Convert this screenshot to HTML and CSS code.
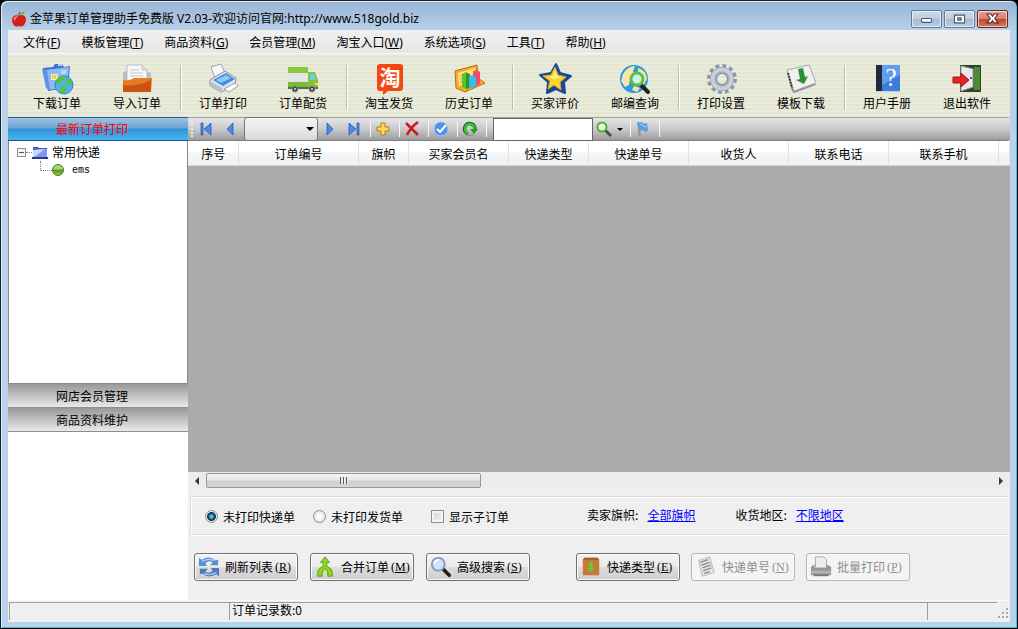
FILE: index.html
```html
<!DOCTYPE html>
<html lang="zh-CN">
<head>
  <meta charset="UTF-8">
  <meta name="viewport" content="width=device-width, initial-scale=1.0">
  <title>金苹果订单管理助手免费版</title>
  <link rel="stylesheet" href="styles.css">
</head>
<body>
  <div class="window">
    <header class="titlebar">
      <svg class="app-icon" viewBox="0 0 16 16">
        <path d="M8 5C5 3 1 4.500 1 9c0 4 3 7 5 6.500q2-.6 4 0c2 .5 5-3 5-7C15 4.500 11 3 8 5z" fill="#d3201b"/>
        <path d="M3 7q1-2.500 4-1.500Q4 7 3.500 10q-1-1-.5-3z" fill="#ff9a8c"/>
        <path d="M8 6Q7.500 3 9 1" stroke="#6b3a14" fill="none"/>
        <path d="M9 3.500q1-3 5-3-1 3.500-5 3z" fill="#6cb52d"/>
      </svg>
      <h1>金苹果订单管理助手免费版 V2.03-欢迎访问官网:http://www.518gold.biz</h1>
      <div class="window-buttons">
        <button type="button" aria-label="最小化"><svg viewBox="2 1 26 14"><rect x="10.500" y="7.500" width="9" height="3.500" rx="1" fill="#fff" stroke="#4a5568"/></svg></button>
        <button type="button" aria-label="最大化"><svg viewBox="2 1 26 14"><path fill-rule="evenodd" d="M10.500 4.500h9v7h-9zM13.500 7v2h3v-2z" fill="#fff" stroke="#4a5568"/></svg></button>
        <button type="button" class="close" aria-label="关闭"><svg viewBox="2 1 26 14"><path d="M10 3.500h3.500l1.500 2 1.500-2H20L17 7.500l3 4h-3.500l-1.500-2-1.500 2H10l3-4z" fill="#fff" stroke="#5c3030"/></svg></button>
      </div>
    </header>

    <div class="client">
      <nav class="menubar">
        <button type="button">文件(<u>F</u>)</button>
        <button type="button">模板管理(<u>T</u>)</button>
        <button type="button">商品资料(<u>G</u>)</button>
        <button type="button">会员管理(<u>M</u>)</button>
        <button type="button">淘宝入口(<u>W</u>)</button>
        <button type="button">系统选项(<u>S</u>)</button>
        <button type="button">工具(<u>T</u>)</button>
        <button type="button">帮助(<u>H</u>)</button>
      </nav>

      <div class="toolbar">
        <button type="button">
          <svg viewBox="0 0 32 32">
            <path d="M2 5l10-1 2-3h7l2 3 6-1-2 22-20 3z" fill="#3d6fd0"/>
            <path d="M4 7l24-3-2 20-18 3z" fill="#8db9f5"/>
            <path d="M1 6l5 1 3 20-4-2z" fill="#5f93e6"/>
            <path d="M17 3q2-3 4 0" stroke="#dbe9ff" stroke-width="1.500" fill="none"/>
            <path d="M10 11h7v6h-7z" fill="#fff3a8"/><path d="M11 13h5M11 15h4" stroke="#d7a63b"/>
            <path d="M20 8h6M20 10h5" stroke="#e8f2ff"/>
            <circle cx="23" cy="22" r="9" fill="#58aef0" stroke="#2d80c9"/>
            <path d="M16 17q4-5 8-4l-1 4-3 1-1 4-4-1zM25 15l5 3 1 5-4-2-3-2zM20 23l6 1-1 4-4 3-2-4z" fill="#4fc83a"/>
          </svg>
          下载订单
        </button>
        <button type="button">
          <svg viewBox="0 0 32 32">
            <path d="M2 9l4-1v10H2zM25 8l5 2v14H25z" fill="#b9bcc2"/>
            <path d="M6 2h15l5 5v13H6z" fill="#f6f7f9" stroke="#b9bdc6"/>
            <path d="M21 2v5h5" fill="#dde1e8" stroke="#b9bdc6"/>
            <path d="M9 7h9M9 10h13M9 13h13" stroke="#c2c6ce"/>
            <path d="M2 17q7 1 11-2h18l-1 14H2z" fill="#e87a22"/>
            <path d="M2 22q14 2 28-5v12H2z" fill="#c95510"/>
          </svg>
          导入订单
        </button>
        <span class="divider"></span>
        <button type="button">
          <svg viewBox="0 0 32 32">
            <path d="M4 4l10-3 4 9-10 5z" fill="#f7f9fc" stroke="#9aa3b2"/>
            <path d="M3 17l15-9 11 7-1 7-14 7-11-6z" fill="#dfe4ec" stroke="#8b94a5"/>
            <path d="M6 17l13-7 9 6-12 7z" fill="#3f8fdc"/>
            <path d="M9 17l10-5 5 3-10 5z" fill="#8fc8f5"/>
            <path d="M3 18l12 7v5l-12-7z" fill="#b8c0ce"/>
            <path d="M17 26l11-6 3 3-9 6z" fill="#fff" stroke="#9aa3b2"/>
          </svg>
          订单打印
        </button>
        <button type="button">
          <svg viewBox="0 0 32 32">
            <path d="M1 4h20v19H1z" fill="#e4e6e4"/><path d="M1 4h20v6H1z" fill="#8cc63f"/>
            <path d="M1 19h20v5H1z" fill="#7abb35"/>
            <path d="M21 9h7l3 8v7H21z" fill="#84c43c"/><path d="M23 11h4l2 6h-6z" fill="#69cdf0"/>
            <path d="M1 24h30v2H1z" fill="#547439"/><path d="M28 20h3v2h-3z" fill="#ffd54a"/>
            <g fill="#444" stroke="#8b8b8b"><circle cx="8" cy="26" r="3"/><circle cx="25" cy="26" r="3"/></g>
            <g fill="#ddd"><circle cx="8" cy="26" r="1"/><circle cx="25" cy="26" r="1"/></g>
          </svg>
          订单配货
        </button>
        <span class="divider"></span>
        <button type="button">
          <svg viewBox="0 0 32 32">
            <path d="M7 1h20q3 0 3 3v21q0 3-3 3H15l-5 4v-4H7q-3 0-3-3V4q0-3 3-3z" fill="#f5460f"/>
            <text class="tao" x="17" y="22" text-anchor="middle">淘</text>
          </svg>
          淘宝发货
        </button>
        <button type="button">
          <svg viewBox="0 0 32 32">
            <path d="M2 8l22-6 1 13 7 5-20 9-9-4z" fill="#f8ae27" stroke="#b86b10"/>
            <path d="M5 10l17-5v13L6 23z" fill="#ffe38b"/>
            <path d="M7 13l8-2M7 16l7-2M7 19l6-1" stroke="#d5982e"/>
            <path d="M9 11l4-2 4 2v14l-4 1-4-2z" fill="#58c62b"/><path d="M13 10l4 1v14l-4 1z" fill="#37961a"/>
            <path d="M20 8l4-1 3 2v12l-4 2-3-1z" fill="#f44e63"/><path d="M16 14l3-2 4 2v10l-4 1-3-1z" fill="#32bdf0"/>
          </svg>
          历史订单
        </button>
        <span class="divider"></span>
        <button type="button">
          <svg viewBox="0 0 32 32">
            <path d="M17 1l4 9 11 3-7 6 1 11-9-4-9 4 1-11-8-7 11-2z" fill="#164a9c" stroke="#164a9c" stroke-width="2" stroke-linejoin="round"/>
            <path d="M16 4l3 8 8 2-6 5 1 8-7-5-6 4 2-8-7-5 8-1z" fill="#ffd42c" stroke="#f0a814"/>
            <path d="M16 7l2 6 5 1-7 2-7-2 5-1z" fill="#fff08a"/>
          </svg>
          买家评价
        </button>
        <button type="button">
          <svg viewBox="0 0 32 32">
            <circle cx="15" cy="16" r="14" fill="#299be0"/>
            <path d="M4 11q5-8 12-8l-2 5 2 4-5 4-1 6-4 2-4-6zM19 5q8 2 9 11l-4 7-5-5zM15 23l6 2-3 4-5-2z" fill="#f8e4a8"/>
            <path d="M22 22l7 7" stroke="#222" stroke-width="4" stroke-linecap="round"/>
            <circle cx="18" cy="16" r="6" fill="#c7f4f2" stroke="#64bb3c" stroke-width="3"/>
          </svg>
          邮编查询
        </button>
        <span class="divider"></span>
        <button type="button">
          <svg viewBox="0 0 32 32">
            <circle cx="17" cy="16" r="13" fill="none" stroke="#8c96a5" stroke-width="4" stroke-dasharray="3.800 3.007"/>
            <circle cx="17" cy="16" r="8.500" fill="none" stroke="#8791a0" stroke-width="7"/>
            <circle cx="17" cy="16" r="9" fill="none" stroke="#c9d0dc" stroke-width="5"/>
            <circle cx="17" cy="16" r="7" fill="none" stroke="#a4aebc" stroke-width="1.500"/>
          </svg>
          打印设置
        </button>
        <button type="button">
          <svg viewBox="0 0 32 32">
            <path d="M2 8l5 20 2 2 22-8-3-3z" fill="#8f8f8f"/>
            <path d="M2 7L24 2l7 18L9 28z" fill="#f1f1f1" stroke="#a8a8a8"/>
            <path d="M3 10l4 15" stroke="#333" stroke-width="2" stroke-dasharray="2 1"/>
            <path d="M13 6l5-1 2 9 3-1-4 8-8-4 4-1z" fill="#279333"/>
          </svg>
          模板下载
        </button>
        <span class="divider"></span>
        <button type="button">
          <svg viewBox="0 0 32 32">
            <path d="M5 2h24v27H5z" fill="#3b7ed9"/><path d="M5 2h6v27H5z" fill="#202a3a"/>
            <path d="M11 2h18v10L11 22z" fill="#5e9df0"/><path d="M5 28h24v1H5z" fill="#c6ccd8"/>
            <text class="question" x="20" y="23" text-anchor="middle">?</text>
          </svg>
          用户手册
        </button>
        <button type="button">
          <svg viewBox="0 0 32 32">
            <path d="M9 2h21v27H9z" fill="#33402f"/><path d="M23 4h6v23h-6z" fill="#4c8a37"/>
            <path d="M10 3l12 3v18l-12 4z" fill="#e9ebea" stroke="#a0a5a0"/><path d="M19 15h2" stroke="#555" stroke-width="2"/>
            <path d="M2 14h8v-4l8 7-8 7v-4H2z" fill="#e5232a" stroke="#a91016"/>
          </svg>
          退出软件
        </button>
      </div>

      <div class="workspace">
        <aside class="sidebar">
          <button type="button" class="section active">最新订单打印</button>
          <ul class="tree">
            <li>
              <div class="node">
                <button type="button" class="toggle" aria-label="折叠"></button>
                <span class="dots"></span>
                <svg class="folder" viewBox="0 0 16 13"><path d="M1 1h5l1 1h8v10H1z" fill="#3c5fc4"/><path d="M1 4l14-1v9H1z" fill="#7d9be8"/><path d="M1 4l12-1L1 12z" fill="#c9d8fb"/><path d="M0 12h16" stroke="#253a8e" stroke-width="2"/></svg>
                <span class="name">常用快递</span>
              </div>
              <ul>
                <li class="leaf"><span class="elbow"></span><span class="ball"></span>ems</li>
              </ul>
            </li>
          </ul>
          <button type="button" class="section">网店会员管理</button>
          <button type="button" class="section">商品资料维护</button>
        </aside>

        <main>
          <div class="navigator">
            <span class="grip"></span>
            <button type="button" aria-label="首页"><svg viewBox="0 0 16 16"><path d="M3 2h2v12H3zM13 2v12L6 8z" fill="#4b8bf0" stroke="#1c4fb5" stroke-width=".7"/></svg></button>
            <button type="button" aria-label="上一页"><svg viewBox="0 0 16 16"><path d="M11 2v12L5 8z" fill="#4b8bf0" stroke="#1c4fb5" stroke-width=".7"/></svg></button>
            <span class="page-select"><select aria-label="页码"><option></option></select></span>
            <button type="button" aria-label="下一页"><svg viewBox="0 0 16 16"><path d="M5 2v12l6-6z" fill="#4b8bf0" stroke="#1c4fb5" stroke-width=".7"/></svg></button>
            <button type="button" aria-label="末页"><svg viewBox="0 0 16 16"><path d="M11 2h2v12h-2zM3 2v12l7-6z" fill="#4b8bf0" stroke="#1c4fb5" stroke-width=".7"/></svg></button>
            <span class="bar"></span>
            <button type="button" aria-label="添加"><svg viewBox="0 0 16 16"><path d="M6 2h4v4h4v4h-4v4H6v-4H2V6h4z" fill="#ffd75a" stroke="#b87d12"/></svg></button>
            <span class="bar"></span>
            <button type="button" aria-label="删除"><svg viewBox="0 0 16 16"><path d="M2 2l12 12M14 1Q7 6 3 14" stroke="#cf1717" stroke-width="2.500" fill="none"/></svg></button>
            <span class="bar"></span>
            <button type="button" aria-label="确认"><svg viewBox="0 0 16 16"><circle cx="8" cy="8" r="7" fill="#4a93e8" stroke="#a9c8ee"/><path d="M4 8l3 3 6-7" stroke="#fff" stroke-width="2" fill="none"/></svg></button>
            <span class="bar"></span>
            <button type="button" aria-label="刷新"><svg viewBox="0 0 16 16"><path d="M6 13Q2 11 2.500 7 4 2 8 2.500q5 .5 5 6" stroke="#167a16" stroke-width="3.500" fill="none"/><path d="M6 12.500Q2.500 11 3 7 4 3 8 3q4.500 0 4.500 5" stroke="#3ac435" stroke-width="2" fill="none"/><path d="M8 8h8l-4 5z" fill="#229e22"/><path d="M5 14h7" stroke="#8c8c8c"/></svg></button>
            <span class="bar"></span>
            <input type="text" class="search" aria-label="搜索">
            <button type="button" class="find" aria-label="查找"><svg viewBox="0 0 16 16"><path d="M9 9l6 6" stroke="#4c4c4c" stroke-width="3"/><circle cx="6" cy="6" r="4.500" fill="#e7f5df" stroke="#4db330" stroke-width="2"/></svg><span class="arrow"></span></button>
            <span class="bar"></span>
            <button type="button" aria-label="旗帜"><svg viewBox="0 0 16 16"><path d="M3 1l2 14" stroke="#8b8f97" stroke-width="2"/><path d="M3 2l4-1 2 2 3-1 1 8-3 1-2-2-4 1z" fill="#5a9ee0"/><path d="M5 4l2-1 2 3 3-1" stroke="#a9d0f5" fill="none"/></svg></button>
            <span class="bar"></span>
          </div>

          <div class="grid">
            <table>
              <colgroup><col class="w50"><col class="w120"><col class="w50"><col class="w100"><col class="w80"><col class="w100"><col class="w100"><col class="w100"><col class="w110"><col></colgroup>
              <thead>
                <tr><th>序号</th><th>订单编号</th><th>旗帜</th><th>买家会员名</th><th>快递类型</th><th>快递单号</th><th>收货人</th><th>联系电话</th><th>联系手机</th><th></th></tr>
              </thead>
            </table>
          </div>
          <div class="scrollbar">
            <button type="button" class="left" aria-label="向左"></button>
            <div class="track"><div class="thumb"><i></i></div></div>
            <button type="button" class="right" aria-label="向右"></button>
          </div>

          <div class="filters">
            <label><input type="radio" name="kind" checked>未打印快递单</label>
            <label><input type="radio" name="kind">未打印发货单</label>
            <label class="sub"><input type="checkbox">显示子订单</label>
            <span class="filter flag">卖家旗帜:<a href="#">全部旗帜</a></span>
            <span class="filter">收货地区:<a href="#">不限地区</a></span>
          </div>

          <div class="actions">
            <div class="group">
              <button type="button">
                <svg viewBox="0 0 24 24"><path d="M1 11V2l3 2q9-5 15 1l3-1v6h-9l3-3q-5-3-8 1l2 3z" fill="#5d8fce"/><path d="M23 13v9l-3-2q-9 5-15-1l-3 1v-6h9l-3 3q5 3 8-1l-2-3z" fill="#4a7cbc"/><path d="M4 6q8-4 13-1M20 18q-8 4-13 1" stroke="#b4d0f0" stroke-width="1.500" fill="none"/></svg>
                刷新列表<kbd>(<u>R</u>)</kbd>
              </button>
              <button type="button">
                <svg viewBox="0 0 24 24"><path d="M12 1l5 6h-3v4q6 3 6 7v4h-5v-4q0-2-3-4-3 2-3 4v4H4v-4q0-4 6-7V7H7z" fill="#8fd41e" stroke="#5e9c10"/></svg>
                合并订单<kbd>(<u>M</u>)</kbd>
              </button>
              <button type="button">
                <svg viewBox="0 0 24 24"><path d="M15 15l6 6" stroke="#222" stroke-width="4" stroke-linecap="round"/><circle cx="9" cy="9" r="7" fill="#cfe4fa" stroke="#8298b8" stroke-width="2"/><path d="M5 8q1-4 5-4" stroke="#fff" stroke-width="2" fill="none"/></svg>
                高级搜索<kbd>(<u>S</u>)</kbd>
              </button>
            </div>
            <div class="group print">
              <button type="button">
                <svg viewBox="0 0 24 24"><path d="M3 4l2-2h14l2 2v17H3z" fill="#c97838"/><path d="M3 4l2-2h14l2 2z" fill="#a55b26"/><path d="M10 6h4v7h3l-5 5-5-5h3z" fill="#6dc23a"/></svg>
                快递类型<kbd>(<u>E</u>)</kbd>
              </button>
              <button type="button" disabled>
                <svg viewBox="0 0 24 24"><path d="M4 5l12-4 5 17-13 4z" fill="#e3e3e3" stroke="#b5b5b5"/><path d="M6 7l8-3M7 10l9-3M8 13l9-3M9 16l9-3M10 19l6-2" stroke="#8c8c8c" stroke-width="1.500"/></svg>
                快递单号<kbd>(<u>N</u>)</kbd>
              </button>
              <button type="button" disabled>
                <svg viewBox="0 0 24 24"><path d="M6 1h9l3 3v9H6z" fill="#eee" stroke="#aaa"/><path d="M1 12l4-3v4h13V9l5 3v9H1z" fill="#979797"/><path d="M1 16h22v3H1z" fill="#b4b4b4"/><path d="M4 20h16v2H4z" fill="#777"/></svg>
                批量打印<kbd>(<u>P</u>)</kbd>
              </button>
            </div>
          </div>
        </main>
      </div>

      <footer class="statusbar">
        <span class="cell first"></span>
        <span class="cell count">订单记录数:0</span>
        <span class="cell last"></span>
        <svg class="resize" viewBox="0 0 12 12"><path d="M8 0h2v2H8zM4 4h2v2H4zM8 4h2v2H8zM0 8h2v2H0zM4 8h2v2H4zM8 8h2v2H8z" fill="#a9a9a9"/></svg>
      </footer>
    </div>
  </div>
</body>
</html>
```
FILE: styles.css
```css
* { box-sizing: border-box; }
body {
  margin: 0;
  background: #000;
  color: #000;
  font: 12px/16px "Noto Sans CJK SC", sans-serif;
}
button, input, select { font: inherit; color: inherit; }
button { padding: 0; border: none; background: none; }
ul { margin: 0; padding: 0; list-style: none; }
svg { display: block; flex: none; overflow: visible; }

/* window frame */
.window {
  display: flex;
  flex-direction: column;
  height: 100vh;
  padding: 0 6px 6px;
  border: 1px solid #16202c;
  border-right-color: #000;
  border-bottom-color: #000;
  border-radius: 7px 7px 0 0;
  background: linear-gradient(#98b4d3, #b9d1ea 30px);
  box-shadow: inset 1px 1px #e8f1fa, inset -1px -1px #3fc4dc;
}
.titlebar {
  display: flex;
  align-items: center;
  flex: none;
  height: 29px;
  padding: 6px 3px 0 4px;
}
.app-icon { width: 16px; height: 16px; }
.titlebar h1 {
  flex: 1;
  margin: 0 0 0 3px;
  font: 12px/16px "Noto Sans", "Noto Sans CJK SC", sans-serif;
}
.window-buttons { display: flex; gap: 2px; }
.window-buttons button {
  width: 31px;
  height: 18px;
  border: 1px solid #66788f;
  border-radius: 2px;
  background: linear-gradient(#cbdaea, #bccee2 50%, #a3bad4 50%, #b9cfe6);
  box-shadow: inset 0 0 0 1px rgba(255, 255, 255, 0.6);
}
.window-buttons svg { width: 29px; height: 16px; }
.window-buttons .close {
  border-color: #6b2620;
  background: linear-gradient(#e3a79b, #d67f70 50%, #c04431 50%, #cf7a5e);
}
.client {
  display: flex;
  flex-direction: column;
  flex: 1;
  min-height: 0;
  margin: 0 1px;
  background: #efefef;
}

.menubar {
  display: flex;
  flex: none;
  gap: 21px;
  height: 24px;
  padding: 3px 15px 0;
  background: linear-gradient(#f0f0f0, #e6e6e6);
  border-bottom: 1px solid #fafafa;
  font-family: "Noto Sans", "Noto Sans CJK SC", sans-serif;
}

.toolbar {
  display: flex;
  flex: none;
  height: 63px;
  padding: 9px 0 0 9px;
  background: repeating-linear-gradient(#ebebdc 0 2px, #e4e6d4 2px 4px);
}
.toolbar button {
  display: flex;
  flex-direction: column;
  align-items: center;
  flex: none;
  width: 80px;
}
.toolbar svg { width: 32px; height: 32px; }
.divider {
  flex: none;
  width: 6px;
  height: 45px;
  margin-top: 2px;
  background: linear-gradient(90deg, transparent 3px, #bcbdae 3px 4px, #fff 4px 5px, transparent 5px);
}
.tao { font: bold 21px "Noto Sans CJK SC", sans-serif; fill: #fff; }
.question { font: 25px "Liberation Serif", serif; fill: #fff; }

.workspace { display: flex; flex: 1; min-height: 0; }

.sidebar {
  flex: none;
  width: 180px;
  background: #fff;
}
.section {
  display: block;
  width: 100%;
  height: 24px;
  padding-right: 12px;
  border-bottom: 1px solid #8e8e8e;
  background: linear-gradient(#989898, #e9e9e9);
}
.section.active {
  border-top: 1px solid #1f5f9f;
  border-bottom-color: #17568c;
  background: linear-gradient(#a3c2e0, #6ba3d4 45%, #2f92d6 50%, #49b4f2);
  color: #f00;
}
.tree {
  height: 243px;
  padding: 2px 8px;
  border: 1px solid #8a8a8a;
  border-top: none;
}
.node { display: flex; align-items: center; height: 18px; }
.toggle {
  width: 9px;
  height: 9px;
  border: 1px solid #919191;
  background: linear-gradient(#3b5a9a, #3b5a9a) center / 5px 1px no-repeat #f4f4f4;
}
.dots { width: 6px; border-top: 1px dotted #808080; }
.folder { width: 16px; height: 13px; }
.name { margin-left: 4px; }
.leaf {
  display: flex;
  align-items: center;
  height: 18px;
  padding-left: 23px;
  font: 10px "Liberation Mono", monospace;
}
.elbow {
  width: 12px;
  height: 10px;
  margin-bottom: 8px;
  border-left: 1px dotted #808080;
  border-bottom: 1px dotted #808080;
}
.ball {
  width: 12px;
  height: 12px;
  margin-right: 8px;
  border: 1px solid #4d7a1c;
  border-radius: 50%;
  background: linear-gradient(#a9d272 40%, #5c9a1d 55%, #90cc40);
}

main {
  display: flex;
  flex-direction: column;
  flex: 1;
  min-width: 0;
}
.navigator {
  display: flex;
  align-items: center;
  flex: none;
  height: 24px;
  padding-left: 2px;
  border-top: 1px solid #a3a3a3;
  border-bottom: 1px solid #7d7d7d;
  border-radius: 0 3px 3px 0;
  background: linear-gradient(#e6e6e6, #c9c9c9 50%, #9c9c9c);
}
.grip { width: 2px; height: 16px; margin: 0 1px; border-left: 2px dotted #eee; }
.navigator button { display: flex; align-items: center; justify-content: center; flex: none; width: 24px; }
.navigator svg { width: 16px; height: 16px; }
.page-select { position: relative; width: 74px; height: 24px; margin-left: 2px; }
.page-select select {
  appearance: none;
  width: 100%;
  height: 100%;
  border: 1px solid #777;
  border-radius: 3px;
  background: linear-gradient(#f4f4f4, #e9e9e9 50%, #d7d7d7);
}
.page-select::after {
  content: "";
  position: absolute;
  top: 10px;
  right: 4px;
  border: 4px solid transparent;
  border-top-color: #000;
  border-bottom: none;
}
.bar { width: 5px; height: 16px; border-right: 1px solid #f6f6f6; }
.search {
  width: 100px;
  height: 23px;
  margin-left: 6px;
  border: 1px solid #646464;
  background: #fff;
}
.navigator .find { gap: 5px; width: 33px; }
.arrow { border: 3px solid transparent; border-top-color: #000; border-bottom: none; }

.grid { flex: 1; min-height: 0; background: #ababab; }
.grid table { width: 100%; table-layout: fixed; border-collapse: collapse; }
.grid th {
  height: 24px;
  padding: 2px 0 0 1px;
  border-right: 1px solid #dfe1e3;
  border-bottom: 1px solid #d5d5d5;
  background: linear-gradient(#fff 45%, #f4f5f6 50%, #f1f2f4);
  font-weight: normal;
}
.w50 { width: 50px; }
.w80 { width: 80px; }
.w100 { width: 100px; }
.w110 { width: 110px; }
.w120 { width: 120px; }

.scrollbar { display: flex; flex: none; height: 17px; background: #ececec; }
.scrollbar button { display: flex; align-items: center; justify-content: center; width: 18px; }
.scrollbar button::before { content: ""; border: 4px solid transparent; }
.scrollbar .left::before { border-right-color: #333; border-left: none; }
.scrollbar .right::before { border-left-color: #333; border-right: none; }
.track { flex: 1; padding: 1px 0; }
.thumb {
  display: flex;
  align-items: center;
  justify-content: center;
  width: 35%;
  height: 15px;
  border: 1px solid #959595;
  border-radius: 2px;
  background: linear-gradient(#f4f4f4, #e6e6e6 48%, #d0d0d2 52%, #d5d5d7);
}
.thumb i { width: 8px; height: 7px; background: repeating-linear-gradient(90deg, #555 0 1px, #eee 1px 3px); }

.filters {
  display: flex;
  align-items: center;
  flex: none;
  height: 39px;
  margin: 7px 2px 0;
  padding: 2px 0 0 14px;
  border: 1px solid #dcdcdc;
  border-right: none;
  box-shadow: inset 1px 1px #fff, 0 1px #fff;
}
.filters label { display: flex; align-items: center; margin-right: 18px; }
.filters input { appearance: none; width: 13px; height: 13px; margin: 0 5px 0 0; }
.filters input[type="radio"] {
  border: 1px solid #8e8f8f;
  border-radius: 50%;
  background: radial-gradient(#fafafa 30%, #d0d0d0);
}
.filters input[type="radio"]:checked {
  background: radial-gradient(circle at 50% 50%, #5fc5ea 1px, #17496f 3px, #123450 4px, #eee 5px);
}
.filters input[type="checkbox"] {
  border: 1px solid #8e8f8f;
  background: linear-gradient(135deg, #cbcfd5, #f6f6f6);
  box-shadow: inset 0 0 0 2px #f4f4f4;
}
.filters .sub { margin-left: 10px; }
.filter { padding-bottom: 3px; }
.filter.flag { margin: 0 40px 0 60px; }
.filter a { margin-left: 9px; color: #00f; }

.actions {
  display: flex;
  flex: none;
  gap: 46px;
  padding: 18px 6px 19px;
}
.group { display: flex; gap: 12px; }
.group.print { gap: 11px; }
.actions button {
  display: flex;
  align-items: center;
  width: 104px;
  height: 28px;
  padding-left: 3px;
  border: 1px solid #707070;
  border-radius: 3px;
  background: linear-gradient(#f3f3f3, #ebebeb 50%, #dddddd 50%, #cfcfcf);
  box-shadow: inset 0 0 0 1px #fbfbfb;
  white-space: nowrap;
}
.actions svg { width: 22px; height: 22px; margin-right: 5px; }
.actions button:disabled {
  border-color: #b4b4b4;
  background: #f4f4f4;
  color: #8f8f8f;
}
kbd { margin-left: 2px; font: 12px "Liberation Serif", serif; }

.statusbar {
  display: flex;
  flex: none;
  height: 22px;
  padding: 1px 0 2px 1px;
  border-top: 1px solid #fafafa;
}
.cell {
  border-top: 1px solid #9d9d9d;
  border-left: 1px solid #9d9d9d;
  padding-left: 2px;
  line-height: 14px;
}
.first { width: 220px; }
.count { flex: 1; }
.last { width: 70px; }
.resize { width: 12px; height: 12px; margin: 6px 0 0 1px; }
```
